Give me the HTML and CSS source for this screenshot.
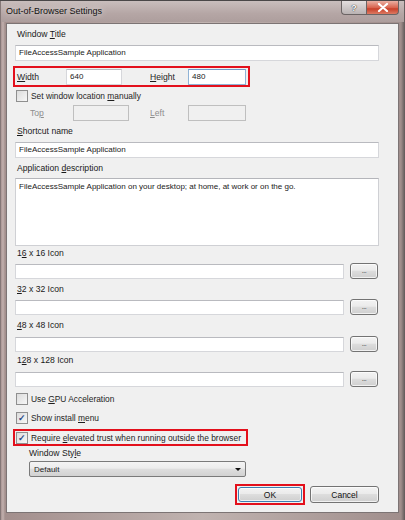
FILE: index.html
```html
<!DOCTYPE html>
<html>
<head>
<meta charset="utf-8">
<link rel="stylesheet" href="styles.css">
</head>
<body>
<div class="window">
  <div class="titlebar">
    <span class="title">Out-of-Browser Settings</span>
    <div class="caption-btns">
      <div class="cbtn help">?</div>
      <div class="cbtn close">
        <svg width="12" height="9" viewBox="0 0 12 9"><path d="M2 1 L10 8 M10 1 L2 8" stroke="#fff" stroke-width="2.2" stroke-linecap="round"/></svg>
      </div>
    </div>
  </div>
  <div class="panel">
    <div class="label l1">Window <u>T</u>itle</div>
    <div class="input full mt5">FileAccessSample Application</div>

    <div class="redbox size-row">
      <span class="lbl w-lbl"><u>W</u>idth</span>
      <div class="input small w-in">640</div>
      <span class="lbl h-lbl"><u>H</u>eight</span>
      <div class="input small h-in focus">480</div>
    </div>

    <div class="check-row mt2"><span class="cb"></span><span>Set window location <u>m</u>anually</span></div>

    <div class="pos-row">
      <span class="lbl dis top-lbl">To<u>p</u></span>
      <div class="input small dis-in top-in"></div>
      <span class="lbl dis left-lbl"><u>L</u>eft</span>
      <div class="input small dis-in left-in"></div>
    </div>

    <div class="label mt4"><u>S</u>hortcut name</div>
    <div class="input full mt5">FileAccessSample Application</div>

    <div class="label mt4">Application <u>d</u>escription</div>
    <div class="input full area mt4">FileAccessSample Application on your desktop; at home, at work or on the go.</div>

    <div class="label mt1">1<u>6</u> x 16 Icon</div>
    <div class="icon-row mt4"><div class="input icon-in"></div><div class="btn dots">...</div></div>

    <div class="label mt4"><u>3</u>2 x 32 Icon</div>
    <div class="icon-row mt4"><div class="input icon-in"></div><div class="btn dots">...</div></div>

    <div class="label mt4"><u>4</u>8 x 48 Icon</div>
    <div class="icon-row mt5"><div class="input icon-in"></div><div class="btn dots">...</div></div>

    <div class="label mt2">1<u>2</u>8 x 128 Icon</div>
    <div class="icon-row mt5"><div class="input icon-in"></div><div class="btn dots">...</div></div>

    <div class="check-row mt5"><span class="cb"></span><span>Use <u>G</u>PU Acceleration</span></div>
    <div class="check-row mt6"><span class="cb checked">&#10003;</span><span>Show install <u>m</u>enu</span></div>
    <div class="redbox trust-row"><span class="cb checked">&#10003;</span><span>Require <u>e</u>levated trust when running outside the browser</span></div>

    <div class="label indent mt1">Window Sty<u>l</u>e</div>
    <div class="select mt2"><span>Default</span><span class="arrow"></span></div>

    <div class="btn-row">
      <div class="okbox"><div class="btn big ok">OK</div></div>
      <div class="btn big">Cancel</div>
    </div>
  </div>
</div>
</body>
</html>
```
FILE: styles.css
```css
html, body {
  margin: 0;
  padding: 0;
  background: #fff;
}
.window {
  width: 405px;
  height: 520px;
  box-sizing: border-box;
  background: linear-gradient(90deg, #5f5a5a 0, #a99493 1px, #c2b1ae 3px, #a38f8d 5px, #c0b3b0 50%, #a08e8c 99%, #5e5858 100%);
  border-top: 1px solid #4a4748;
  display: flex;
  flex-direction: column;
  font-family: "Liberation Sans", Arial, sans-serif;
  font-size: 8px;
  color: #1e1e1e;
  position: relative;
}
.titlebar {
  height: 21px;
  display: flex;
  align-items: flex-start;
  justify-content: space-between;
  background: linear-gradient(180deg, #c9bebd 0, #b5a6a5 60%, #ad9e9d 100%);
  margin: 0 1px;
}
.title {
  font-size: 9px;
  color: #111;
  margin: 5px 0 0 5px;
  text-shadow: 0 0 6px rgba(255,255,255,0.9);
}
.caption-btns {
  display: flex;
  margin-right: 5px;
}
.cbtn {
  height: 14px;
  border: 1px solid #6b6464;
  border-top: none;
  box-sizing: border-box;
  display: flex;
  align-items: center;
  justify-content: center;
}
.help {
  width: 25px;
  border-radius: 0 0 0 4px;
  background: linear-gradient(180deg, #e4dfdf, #b9b2b2);
  color: #fff;
  font-weight: bold;
  font-size: 9px;
  text-shadow: 0 0 1px #333, 0 0 1px #333;
  border-right: none;
}
.close {
  width: 33px;
  border-radius: 0 0 4px 0;
  background: linear-gradient(180deg, #eab0a3 0, #d96550 50%, #c8402a 60%, #dc7a62 100%);
}
.panel {
  flex: 1;
  margin: 1px 6px 7px 6px;
  background: #f0f0f0;
  border: 1px solid #7c7474;
  padding: 4px 20px 0 8px;
  display: flex;
  flex-direction: column;
  align-items: flex-start;
}
.label {
  height: 12px;
  line-height: 12px;
  padding-left: 2px;
  color: #1a1a1a;
  white-space: nowrap;
  font-size: 8.6px;
}
.l1 { margin-top: 0; }
.indent { margin-left: 12px; }
.mt1 { margin-top: 1px; }
.mt2 { margin-top: 2px; }
.mt4 { margin-top: 4px; }
.mt5 { margin-top: 5px; }
.mt6 { margin-top: 6px; }
.input {
  box-sizing: border-box;
  height: 16px;
  background: #fff;
  border: 1px solid #d6d7db;
  border-top-color: #b9babf;
  padding: 0 3px;
  line-height: 14px;
  color: #1a1a1a;
  white-space: nowrap;
  overflow: hidden;
}
.full { width: 364px; }
.area {
  height: 68px;
  padding-top: 2px;
  line-height: 12px;
  border-color: #cfd0d4;
  border-top-color: #b4b5ba;
}
.redbox {
  box-sizing: border-box;
  border: 2px solid #e3101c;
  margin-left: -2px;
}
.size-row {
  margin-top: 5px;
  width: 237px;
  height: 21px;
  display: flex;
  align-items: center;
  font-size: 8.6px;
}
.lbl { white-space: nowrap; }
.w-lbl { margin-left: 2px; width: 49px; }
.w-in { width: 56px; font-size: 8px; }
.h-lbl { margin-left: 28px; width: 38px; }
.h-in { width: 58px; font-size: 8px; }
.focus { border-color: #8fb3d6; border-top-color: #6e9bc9; }
.check-row {
  height: 13px;
  display: flex;
  align-items: center;
  margin-left: 1px;
  white-space: nowrap;
  font-size: 8.4px;
}
.cb {
  box-sizing: border-box;
  width: 12px;
  height: 12px;
  border: 1px solid #8f8f8f;
  background: linear-gradient(135deg, #dcdcdc, #f7f7f7);
  margin-right: 3px;
  display: inline-flex;
  align-items: center;
  justify-content: center;
  font-size: 9px;
  color: #2a4a8a;
  font-weight: bold;
  flex: none;
}
.pos-row {
  margin-top: 3px;
  height: 16px;
  display: flex;
  align-items: center;
  font-size: 8.6px;
}
.dis { color: #8d8d8d; }
.top-lbl { margin-left: 15px; width: 43px; }
.top-in { width: 56px; }
.left-lbl { margin-left: 21px; width: 38px; }
.left-in { width: 58px; }
.dis-in { background: #f0f0f0; border-color: #bfbfbf; }
.icon-row {
  display: flex;
  align-items: center;
  height: 16px;
}
.icon-in { width: 329px; height: 15px; }
.btn {
  box-sizing: border-box;
  border: 1px solid #737373;
  border-radius: 3px;
  background: linear-gradient(180deg, #f3f3f3 0, #ebebeb 45%, #dddddd 50%, #cfcfcf 100%);
  display: flex;
  align-items: center;
  justify-content: center;
  color: #111;
  box-shadow: inset 0 0 0 1px rgba(255,255,255,0.7);
}
.dots {
  margin-left: 6px;
  width: 28px;
  height: 16px;
  font-size: 7px;
  letter-spacing: -0.5px;
  color: #333;
  line-height: 10px;
}
.trust-row {
  margin-top: 5px;
  width: 235px;
  height: 17px;
  display: flex;
  align-items: center;
  padding-left: 1px;
  white-space: nowrap;
  font-size: 8.4px;
}
.select {
  margin-left: 14px;
  box-sizing: border-box;
  width: 217px;
  height: 16px;
  border: 1px solid #7a7a7a;
  border-radius: 2px;
  background: linear-gradient(180deg, #f4f4f4 0, #ececec 45%, #dedede 50%, #d2d2d2 100%);
  display: flex;
  align-items: center;
  justify-content: space-between;
  padding: 0 4px;
}
.arrow {
  width: 0;
  height: 0;
  border-left: 3px solid transparent;
  border-right: 3px solid transparent;
  border-top: 3px solid #111;
}
.btn-row {
  margin-top: 7px;
  align-self: stretch;
  display: flex;
  justify-content: flex-end;
  align-items: center;
  margin-right: -1px;
}
.okbox {
  box-sizing: border-box;
  border: 2px solid #e3101c;
  width: 70px;
  height: 21px;
  padding: 1px;
  margin-right: 5px;
}
.okbox .ok { width: 100%; height: 100%; border-color: #3c7fb1; }
.big {
  width: 69px;
  height: 17px;
  font-size: 8.5px;
}
```
